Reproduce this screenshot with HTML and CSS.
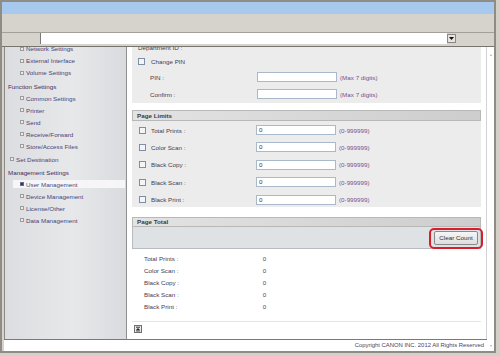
FILE: index.html
```html
<!DOCTYPE html>
<html>
<head>
<meta charset="utf-8">
<title>Remote UI</title>
<link rel="stylesheet" href="styles.css">
</head>
<body>
<div class="window">
  <div class="titlebar"></div>
  <div class="toolbar"></div>
  <div class="addressbar">
    <div class="addr-spacer"></div>
    <div class="addr-field"></div>
    <div class="addr-btn"><svg width="5" height="3" viewBox="0 0 5 3"><path d="M0 0H5L2.5 3Z" fill="#111"/></svg></div>
    <div class="addr-rest"></div>
  </div>
  <div class="body-area">
    <div class="left-col">
      <div class="main">
        <nav class="sidebar">
          <ul class="nav">
            <li class="sub"><span class="link"><i class="bul"></i>Network Settings</span></li>
            <li class="sub"><span class="link"><i class="bul"></i>External Interface</span></li>
            <li class="sub"><span class="link"><i class="bul"></i>Volume Settings</span></li>
            <li class="head gap">Function Settings</li>
            <li class="sub"><span class="link"><i class="bul"></i>Common Settings</span></li>
            <li class="sub"><span class="link"><i class="bul"></i>Printer</span></li>
            <li class="sub"><span class="link"><i class="bul"></i>Send</span></li>
            <li class="sub"><span class="link"><i class="bul"></i>Receive/Forward</span></li>
            <li class="sub"><span class="link"><i class="bul"></i>Store/Access Files</span></li>
            <li class="top gap1"><span class="link"><i class="bul"></i>Set Destination</span></li>
            <li class="head gap1">Management Settings</li>
            <li class="sub"><span class="link active"><i class="bul on"></i>User Management</span></li>
            <li class="sub"><span class="link"><i class="bul"></i>Device Management</span></li>
            <li class="sub"><span class="link"><i class="bul"></i>License/Other</span></li>
            <li class="sub"><span class="link"><i class="bul"></i>Data Management</span></li>
          </ul>
        </nav>
        <div class="content">
          <div class="content-inner">
            <section class="dept">
              <div class="dept-title">Department ID :</div>
              <div class="frow r1"><i class="cb"></i><span>Change PIN</span></div>
              <div class="frow r2"><span class="lbl-pin">PIN :</span><span class="inp"></span><span class="hint">(Max 7 digits)</span></div>
              <div class="frow r3"><span class="lbl-pin">Confirm :</span><span class="inp"></span><span class="hint">(Max 7 digits)</span></div>
            </section>

            <div class="hdr hdr-limits">Page Limits</div>
            <section class="limits-body">
              <div class="frow lrow"><i class="cb"></i><span class="lbl">Total Prints :</span><span class="inp">0</span><span class="hint">(0-999999)</span></div>
              <div class="frow lrow"><i class="cb"></i><span class="lbl">Color Scan :</span><span class="inp">0</span><span class="hint">(0-999999)</span></div>
              <div class="frow lrow"><i class="cb"></i><span class="lbl">Black Copy :</span><span class="inp">0</span><span class="hint">(0-999999)</span></div>
              <div class="frow lrow"><i class="cb"></i><span class="lbl">Black Scan :</span><span class="inp">0</span><span class="hint">(0-999999)</span></div>
              <div class="frow lrow"><i class="cb"></i><span class="lbl">Black Print :</span><span class="inp">0</span><span class="hint">(0-999999)</span></div>
            </section>

            <div class="hdr hdr-total">Page Total</div>
            <div class="band">
              <span class="btn-wrap"><span class="btn">Clear Count</span><span class="ring"></span></span>
            </div>
            <div class="tlist">
              <div class="trow"><span class="tl">Total Prints :</span><span>0</span></div>
              <div class="trow"><span class="tl">Color Scan :</span><span>0</span></div>
              <div class="trow"><span class="tl">Black Copy :</span><span>0</span></div>
              <div class="trow"><span class="tl">Black Scan :</span><span>0</span></div>
              <div class="trow"><span class="tl">Black Print :</span><span>0</span></div>
            </div>
            <div class="sep"></div>
            <div class="totop"><svg width="8" height="8" viewBox="0 0 8 8"><rect x="0.5" y="0.5" width="7" height="7" fill="#e9e9e9" stroke="#6f6f6f"/><path d="M2 2.2H6" stroke="#222" stroke-width="0.9"/><path d="M2 5L4 3L6 5Z" fill="#222"/><path d="M2 5.9H6" stroke="#222" stroke-width="0.9"/></svg></div>
          </div>
        </div>
      </div>
      <div class="footer">Copyright CANON INC. 2012 All Rights Reserved</div>
    </div>
    <div class="scrollcol"><span class="mark up"></span><span class="mark down"></span></div>
  </div>
</div>
</body>
</html>
```
FILE: styles.css
```css
* { box-sizing: border-box; }
html, body { margin: 0; padding: 0; }
body {
  width: 500px; height: 356px; overflow: hidden;
  background: #d4d0c8;
  font-family: "Liberation Sans", Arial, sans-serif;
  font-size: 6.25px;
  color: #453d55;
}
.window {
  width: 496px; height: 353px;
  border: 2px solid #8f8b86;
  display: flex; flex-direction: column;
  background: #d6d3cd;
}
.titlebar { flex: none; height: 12px; background: #a8c9ee; }
.toolbar { flex: none; height: 19px; background: #d6d3cd; border-bottom: 1px solid #a39f99; }
.addressbar { flex: none; height: 14px; display: flex; border-bottom: 1px solid #77746f; }
.addr-spacer { width: 38px; flex: none; }
.addr-field { width: 407px; height: 11px; flex: none; background: #fff; border-left: 1px solid #7d7b77; }
.addr-btn {
  width: 9px; height: 9px; flex: none; margin-top: 0.5px;
  background: #e6e4e0; border: 1px solid #8a8884;
  display: flex; align-items: center; justify-content: center;
}
.addr-rest { flex: 1; }

.body-area { flex: 1; display: flex; min-height: 0; }
.left-col { flex: 1; display: flex; flex-direction: column; padding-left: 2px; }
.main { height: 293px; display: flex; border-bottom: 1px solid #7b7975; overflow: hidden; }
.footer {
  height: 11px; background: #fff; text-align: right;
  padding-right: 3px; line-height: 11px; color: #4a4366;
  font-size: 5.9px;
}
.scrollcol {
  width: 7px; flex: none; background: #fff;
  display: flex; flex-direction: column; align-items: center; justify-content: space-between;
  padding: 7px 0 4px;
}
.mark { width: 0; height: 0; border-left: 1.5px solid transparent; border-right: 1.5px solid transparent; }
.mark.up { border-bottom: 2px solid #b0b0b0; }
.mark.down { border-top: 2px solid #b0b0b0; }

.sidebar {
  width: 123px; flex: none; overflow: hidden;
  border-left: 1px solid #8d8a85; border-right: 1px solid #8f8f8f;
  background: linear-gradient(to right, #dcdde0, #e7e8ea 55%, #dadbde);
}
.nav { list-style: none; margin: -4.5px 0 0; padding: 0; }
.nav li { height: 12px; display: flex; align-items: center; white-space: nowrap; }
.nav li.gap { margin-top: 1.5px; }
.nav li.gap1 { margin-top: 1px; }
.nav .head { padding-left: 3px; color: #3e2f5c; }
.nav .sub { padding-left: 8px; }
.nav .top { padding-left: 5px; }
.link { display: flex; align-items: center; height: 8px; flex: 1; color: #47457a; margin-right: 1px; }
.nav .sub .link { padding-left: 7px; }
.link.active { background: #f6f6f8; }
.bul {
  display: inline-block; width: 4px; height: 4px; margin-right: 2px;
  border: 1px solid #9c9c9c; background: #ececec; flex: none;
}
.bul.on { background: #24347a; border-color: #6a6a80; }

.content {
  width: 360px; flex: none; background: #fff; overflow: hidden;
  padding: 0 5px; border-right: 1px solid #d2d2d2;
}
.content-inner { margin-top: -7px; }
.frow { display: flex; align-items: center; white-space: nowrap; }
.cb { display: block; width: 7px; height: 7px; flex: none; border: 1px solid #7d8ea6; background: #f3f5f8; }
.inp {
  display: block; flex: none; width: 80px; height: 10px;
  border: 1px solid #a9b8cb; background: #fff;
  padding-left: 2px; line-height: 8px; color: #333;
}
.hint { margin-left: 3px; color: #7a4f8e; }

.dept { background: #ececec; padding: 3px 0 2px; }
.dept-title { height: 10px; line-height: 10px; padding-left: 6px; color: #3f3a4a; }
.dept .r1 { margin-top: 2px; height: 13px; padding-left: 6px; }
.dept .r1 .cb { margin-right: 6px; }
.dept .r2 { margin-top: 2px; height: 14px; padding-left: 18px; }
.dept .r3 { margin-top: 3px; height: 14px; padding-left: 18px; }
.lbl-pin { width: 107px; flex: none; }

.hdr {
  height: 11px; border: 1px solid #b8b8b8;
  background: linear-gradient(to right, #e3e3e3, #cdcdcd);
  font-weight: bold; padding-left: 4px; line-height: 9px; color: #3a3a3a;
}
.hdr-limits { margin-top: 7px; }
.hdr-total { margin-top: 10px; height: 10px; line-height: 8px; }
.limits-body {
  background: #ececec; padding: 4px 0 2.6px;
  display: flex; flex-direction: column; gap: 7.4px;
}
.lrow { height: 10px; padding-left: 7px; }
.lrow .cb { margin-right: 5px; }
.lrow .lbl { width: 105px; flex: none; }

.band {
  height: 22px; background: #dfe2e5;
  border: 1px solid #b8bcc0; border-top: none;
  display: flex; justify-content: flex-end; align-items: flex-start;
  padding: 3.5px 2px 0 0;
}
.btn-wrap { position: relative; display: block; }
.btn {
  display: block; width: 44px; height: 14px; line-height: 12px; text-align: center;
  border: 1px solid #8a8a8a; border-radius: 2px;
  background: linear-gradient(#f6f6f6, #dedede); color: #333;
}
.ring {
  position: absolute; left: -5px; right: -5px; top: -3px; bottom: -4px;
  border: 2px solid #d61f2b; border-radius: 5px;
}
.tlist { padding-top: 3px; }
.trow { height: 12.1px; display: flex; align-items: center; padding-left: 12px; }
.tl { width: 118.7px; flex: none; }
.sep { margin-top: 8.5px; border-top: 1px solid #e4e4e4; }
.totop { margin: 2.5px 0 0 2px; height: 8px; }
.totop svg { display: block; }
```
